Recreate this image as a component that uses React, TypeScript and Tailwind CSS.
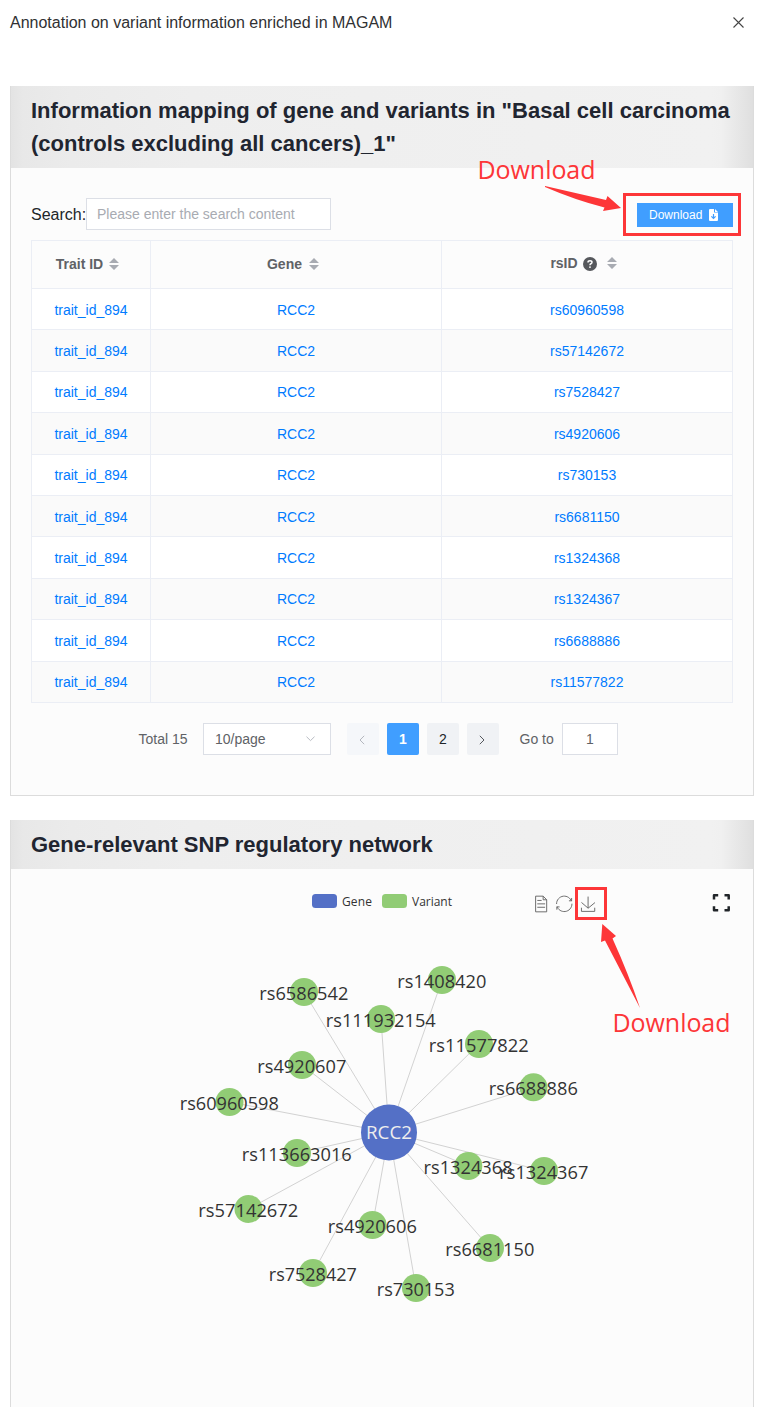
import React from "react";

const RS_IDS = [
  "rs60960598", "rs57142672", "rs7528427", "rs4920606", "rs730153",
  "rs6681150", "rs1324368", "rs1324367", "rs6688886", "rs11577822",
];

const HUB = { x: 389, y: 1132.5 };

// [label, node x, node y, label width]
const NODES: [string, number, number, number][] = [
  ["rs6586542", 304, 992, 89],
  ["rs1408420", 442, 980, 89],
  ["rs111932154", 381, 1019, 110],
  ["rs11577822", 479, 1044, 100],
  ["rs4920607", 302, 1065, 89],
  ["rs6688886", 533.5, 1087.3, 89],
  ["rs60960598", 229.5, 1102, 99],
  ["rs113663016", 297, 1153, 110],
  ["rs1324368", 468.3, 1166, 89],
  ["rs1324367", 544, 1171, 89],
  ["rs57142672", 248.5, 1209, 100],
  ["rs4920606", 372.5, 1225, 89],
  ["rs6681150", 490, 1248, 89],
  ["rs7528427", 313, 1273, 88],
  ["rs730153", 416, 1288, 78],
];

function SortIcon({ className = "" }: { className?: string }) {
  return (
    <svg width="10" height="12" viewBox="0 0 10 12" className={className} fill="#a8abb2">
      <path d="M0 5L5 0L10 5z M0 7H10L5 12z" />
    </svg>
  );
}

function CardHeader({ children, className }: { children: React.ReactNode; className: string }) {
  return (
    <div
      className={
        "border-x border-[#dcdcdc] bg-[linear-gradient(90deg,#e3e3e3_0px,#e8e8e8_12px,#ebebeb_60px,#eeeeee_180px,#f1f1f1_700px,#f0f0f0_710px,#dfdfdf_742px)] pl-5 text-[22px] font-bold leading-[33px] text-[#212530] " +
        className
      }
    >
      {children}
    </div>
  );
}

function Row({ id, index }: { id: string; index: number }) {
  return (
    <div
      className={
        "grid flex-1 grid-cols-[119px_291px_291px] border-b border-[#ebeef5] text-[14px] text-[#007bff] " +
        (index % 2 ? "bg-[#fafafa]" : "bg-white")
      }
    >
      {["trait_id_894", "RCC2", id].map((t, i) => (
        <a key={i} className="flex items-center justify-center border-r border-[#ebeef5] pt-[1.6px]">
          {t}
        </a>
      ))}
    </div>
  );
}

function TableCard() {
  return (
    <section className="flex h-[710px] flex-col">
      <CardHeader className="h-[82px] pt-2">
        <div className="whitespace-nowrap">Information mapping of gene and variants in "Basal cell carcinoma</div>
        <div className="whitespace-nowrap">(controls excluding all cancers)_1"</div>
      </CardHeader>
      <div className="flex-1 border border-t-0 border-[#dcdcdc] bg-[#fcfcfc] px-5 pt-[30px]">
        <div className="flex h-8 items-center">
          <span className="w-[55px] whitespace-nowrap pt-[2px] text-[16px] text-[#212529]">Search:</span>
          <div className="flex h-8 w-[245px] items-center border border-[#dcdfe6] bg-white pl-[10px] pt-px text-[14px] text-[#a8abb2]">
            Please enter the search content
          </div>
          <button className="ml-auto mt-[2px] flex h-6 w-24 items-center bg-[#409eff] pl-3 text-[12px] font-medium text-white">
            Download
            <svg className="ml-[7px]" width="9" height="12" viewBox="0 0 9 12">
              <path fill="#fff" d="M0 1Q0 0 1 0H5V3.5H9V11Q9 12 8 12H1Q0 12 0 11z M6 0L9 3H6z" />
              <path d="M4.5 5V9M2.4 7.4L4.5 9.5L6.6 7.4" stroke="#409eff" strokeWidth="1.2" fill="none" />
            </svg>
          </button>
        </div>
        <div className="mt-[10px] flex h-[463px] w-[702px] flex-col border-l border-t border-[#ebeef5]">
          <div className="grid h-12 shrink-0 grid-cols-[119px_291px_291px] border-b border-[#ebeef5] text-[14px] font-bold text-[#606266]">
            <div className="flex items-center justify-center border-r border-[#ebeef5] pr-[7px]">
              Trait ID<SortIcon className="-mt-px ml-[6px]" />
            </div>
            <div className="flex items-center justify-center border-r border-[#ebeef5] pr-[6px]">
              Gene<SortIcon className="-mt-px ml-[7px]" />
            </div>
            <div className="flex items-center justify-center border-r border-[#ebeef5] pb-[2px] pr-[7px]">
              rsID
              <svg className="ml-[5px] mt-px" width="14" height="14" viewBox="0 0 14 14">
                <circle cx="7" cy="7" r="7" fill="#56585c" />
                <path d="M5 5.4Q5 3.8 7 3.8Q9 3.8 9 5.3Q9 6.2 7.9 6.7Q7 7.1 7 8.2" fill="none" stroke="#fff" strokeWidth="1.5" />
                <circle cx="7" cy="10.1" r=".95" fill="#fff" />
              </svg>
              <SortIcon className="-mt-px ml-[10px]" />
            </div>
          </div>
          {RS_IDS.map((id, i) => (
            <Row key={id} id={id} index={i} />
          ))}
        </div>
        <div className="mt-5 flex h-8 items-center pl-[107px] text-[14px] text-[#606266]">
          <span className="w-[65px] whitespace-nowrap pl-[.5px] pt-px">Total 15</span>
          <div className="flex h-8 w-32 items-center justify-between border border-[#dcdfe6] bg-white pl-[11px] pr-[15px] pt-px">
            10/page
            <svg className="-mt-px" width="9" height="6" viewBox="0 0 9 6" fill="none" stroke="#b8bbc2">
              <path d="M.5 .7L4.5 4.6L8.5 .7" />
            </svg>
          </div>
          <div className="ml-4 flex gap-2 text-[#212529]">
            <div className="flex size-8 items-center justify-center rounded-xs bg-[#f5f7fa] pr-[3px] pt-px">
              <svg width="6" height="10" viewBox="0 0 6 10" fill="none" stroke="#b4b7be">
                <path d="M5.2 .8L1 5L5.2 9.2" />
              </svg>
            </div>
            <div className="flex size-8 items-center justify-center rounded-xs bg-[#409eff] pt-px font-bold text-white">1</div>
            <div className="flex size-8 items-center justify-center rounded-xs bg-[#f0f2f5] pt-px">2</div>
            <div className="flex size-8 items-center justify-center rounded-xs bg-[#f0f2f5] pr-[2px] pt-px">
              <svg width="6" height="10" viewBox="0 0 6 10" fill="none" stroke="#55585e">
                <path d="M.8 .8L5 5L.8 9.2" />
              </svg>
            </div>
          </div>
          <span className="ml-[20.5px] w-[42.5px] whitespace-nowrap pt-px">Go to</span>
          <div className="flex h-8 w-14 items-center justify-center border border-[#dcdfe6] bg-white pt-px">1</div>
        </div>
      </div>
    </section>
  );
}

function Network() {
  return (
    <svg
      className="block"
      width="742"
      height="538"
      viewBox="11 869 742 538"
      fontFamily="'Open Sans', 'Noto Sans', sans-serif"
    >
      <rect x="312" y="894" width="25" height="14" rx="3.5" fill="#5470c6" />
      <text x="342" y="906" fontSize="12" fill="#333" textLength="30">Gene</text>
      <rect x="382" y="894" width="25" height="14" rx="3.5" fill="#91cc75" />
      <text x="412" y="906" fontSize="12" fill="#333" textLength="40">Variant</text>

      <g fill="none" stroke="#666">
        <path
          transform="translate(532.4 895.6) scale(.28)"
          strokeWidth="3.4"
          d="M17.5,17.3H33 M45.4,29.5h-28 M11.5,2v56H51V14.8L38.4,2H11.5z M38.4,2.2v12.7H51 M45.4,41.7h-28"
        />
        <path
          transform="translate(556 895.6) scale(.275)"
          strokeWidth="3.4"
          d="M47,18.9h9.8V8.7 M56.3,20.1C52.1,9,40.5,0.6,26.8,2.1C12.6,3.7,1.6,16.2,2.1,30.6 M13,41.1H3.1v10.2 M3.7,39.9c4.2,11.1,15.8,19.5,29.5,18c14.2-1.6,25.2-14.1,24.7-28.5"
        />
        <path
          transform="translate(580.2 896.6) scale(.27 .255)"
          strokeWidth="3.6"
          d="M4.7,22.9L29.3,45.5L54.7,23.4M4.6,43.6L4.6,58L53.8,58L53.8,43.6M29.2,45.1L29.2,0"
        />
      </g>
      <path
        d="M714 899.5V895.3H718.2 M724.5 895.3H728.7V899.5 M728.7 906.2V910.2H724.5 M718.2 910.2H714V906.2"
        fill="none"
        stroke="#212529"
        strokeWidth="2.5"
        strokeLinejoin="round"
      />

      <g stroke="#d2d2d2" strokeWidth="1">
        {NODES.map(([label, x, y]) => (
          <line key={label} x1={HUB.x} y1={HUB.y} x2={x} y2={y} />
        ))}
      </g>
      <circle cx={HUB.x} cy={HUB.y} r="28" fill="#5470c6" />
      {NODES.map(([label, x, y]) => (
        <circle key={label} cx={x} cy={y} r="14" fill="#91cc75" />
      ))}
      <text x={HUB.x} y="1139" fontSize="18.5" fill="#eee" textAnchor="middle" textLength="46" lengthAdjust="spacingAndGlyphs">RCC2</text>
      {NODES.map(([label, x, y, w]) => (
        <text
          key={label}
          x={x - w / 2 - 0.2}
          y={Math.round(y) + 8}
          fontSize="19"
          fill="#333"
          textLength={w}
          lengthAdjust="spacingAndGlyphs"
        >
          {label}
        </text>
      ))}
    </svg>
  );
}

function Callouts() {
  return (
    <svg
      className="pointer-events-none absolute left-0 top-0"
      width="765"
      height="1407"
      fill="#fd3638"
      fontFamily="'Open Sans', 'Noto Sans', sans-serif"
      fontSize="25"
    >
      <rect x="624.5" y="194.5" width="115" height="40" fill="none" stroke="#fd3638" strokeWidth="3" />
      <text x="477.5" y="179" textLength="118">Download</text>
      <path d="M545 186L606 200L607.5 196L621 208L603 211L604.5 207.5Q575 200 545 187z" />
      <rect x="576.5" y="888.5" width="29" height="30" fill="none" stroke="#fd3638" strokeWidth="3" />
      <text x="612.5" y="1032" textLength="118">Download</text>
      <path d="M640 1008L605 940.5L601 942L602.3 924L616 936L612.5 938.5Q629 975 640 1008z" />
    </svg>
  );
}

export default function App() {
  return (
    <main className="relative h-[1407px] w-[765px] overflow-hidden bg-white font-['Liberation_Sans',Arial,sans-serif]">
      <header className="flex h-[86px] items-start justify-between pl-[10px] pr-[21px] pt-[10px]">
        <h1 className="pt-px text-[16px] leading-6 text-[#303133]">Annotation on variant information enriched in MAGAM</h1>
        <svg className="mt-[7px]" width="11" height="11" viewBox="0 0 11 11" stroke="#444" strokeWidth="1.1">
          <path d="M.5 .5L10.5 10.5M10.5 .5L.5 10.5" />
        </svg>
      </header>
      <div className="ml-[10px] flex w-[744px] flex-col gap-6">
        <TableCard />
        <section>
          <CardHeader className="h-[49px] pt-2">Gene-relevant SNP regulatory network</CardHeader>
          <div className="border-x border-[#dcdcdc] bg-[#fcfcfc]">
            <Network />
          </div>
        </section>
      </div>
      <Callouts />
    </main>
  );
}
